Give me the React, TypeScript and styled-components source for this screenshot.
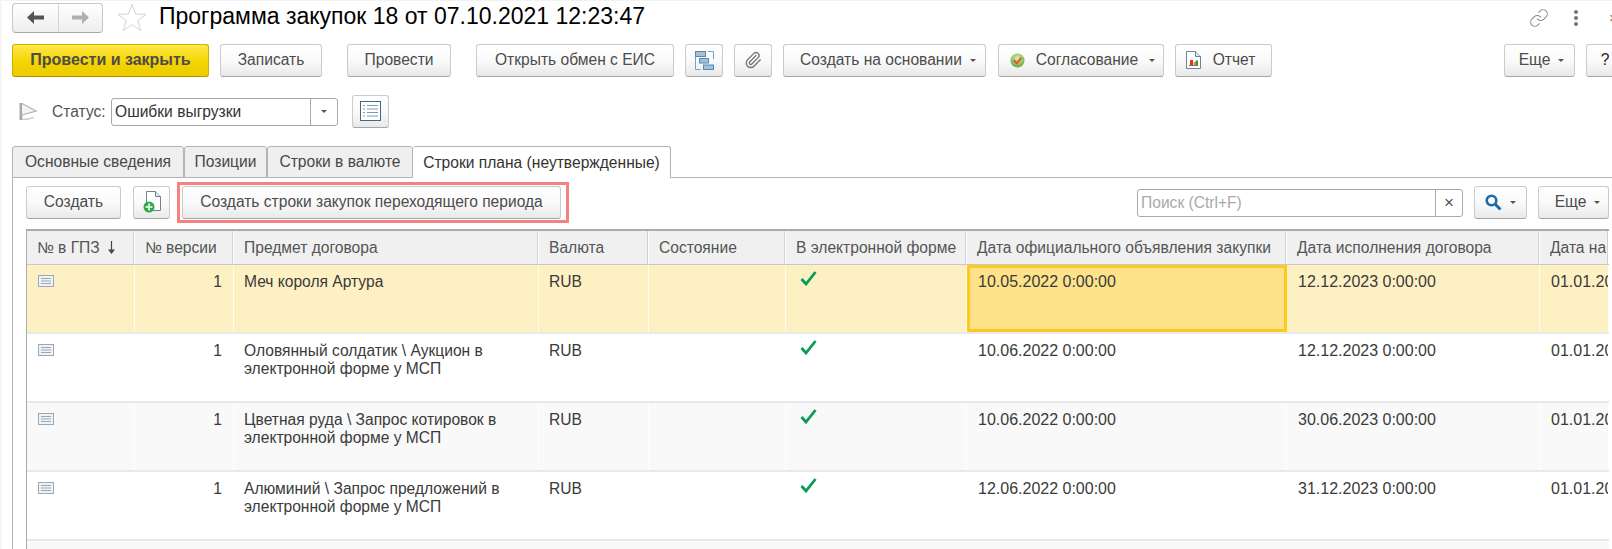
import { ReactNode } from "react";
import styled, { createGlobalStyle } from "styled-components";
import { Link, Paperclip } from "lucide-react";

const GlobalStyle = createGlobalStyle`
  html, body {
    margin: 0;
    padding: 0;
    background: #fff;
    overflow: hidden;
  }
  body {
    font-family: "Liberation Sans", Arial, sans-serif;
    font-size: 15.6px;
    color: #3b3b3b;
  }
`;

const Page = styled.div`
  width: 1612px;
  height: 549px;
  box-sizing: border-box;
  overflow: hidden;
  border-top: 1px solid #f2f2f2;
  border-left: 2px solid #f5f5f5;
  padding-left: 10px;
  display: flex;
  flex-direction: column;
`;

const TitleRow = styled.div`
  height: 31px;
  margin-top: 1px;
  display: flex;
  align-items: center;
  flex-shrink: 0;
`;

const NavGroup = styled.div`
  width: 91px;
  height: 30px;
  box-sizing: border-box;
  display: flex;
  border: 1px solid #c8c8c8;
  border-bottom-color: #a8a8a8;
  border-radius: 4px;
  background: linear-gradient(#ffffff, #eeeeee);
`;

const NavPart = styled.div<{ $first?: boolean }>`
  flex: ${(p) => (p.$first ? "0 0 45px" : "1")};
  display: flex;
  align-items: center;
  justify-content: center;
  border-right: ${(p) => (p.$first ? "1px solid #d4d4d4" : "none")};
`;

const StarBox = styled.div`
  margin-left: 14px;
  width: 30px;
  height: 29px;
`;

const Title = styled.h1`
  margin: 0 0 2px 12px;
  font-size: 23px;
  font-weight: 400;
  color: #000;
  white-space: nowrap;
`;

const TitleTools = styled.div`
  margin-left: auto;
  display: flex;
  align-items: center;
  color: #8c8c8c;
`;

const Dots = styled.div`
  margin-left: 25px;
  display: flex;
  flex-direction: column;
  gap: 2px;
  width: 4px;

  i {
    width: 4px;
    height: 4px;
    border-radius: 50%;
    background: #777;
  }
`;

const CloseMark = styled.span`
  margin-left: 31px;
  width: 3px;
  overflow: hidden;
  font-size: 15px;
  color: #777;
`;

const Toolbar = styled.div`
  display: flex;
  align-items: center;
  margin-top: 11px;
  height: 33px;
  flex-shrink: 0;
`;

const Button = styled.div<{
  $w: number;
  $gap?: number;
  $primary?: boolean;
  $inner?: number;
  $padLeft?: number;
  $padRight?: number;
}>`
  width: ${(p) => p.$w}px;
  height: 33px;
  margin-left: ${(p) => p.$gap ?? 0}px;
  box-sizing: border-box;
  flex-shrink: 0;
  display: flex;
  align-items: center;
  justify-content: center;
  gap: ${(p) => p.$inner ?? 8}px;
  padding: 0 ${(p) => p.$padRight ?? 0}px 1px ${(p) => p.$padLeft ?? 0}px;
  border: 1px solid ${(p) => (p.$primary ? "#d0b000" : "#cbcbcb")};
  border-bottom-color: ${(p) => (p.$primary ? "#b09400" : "#a6a6a6")};
  border-radius: 3px;
  background: ${(p) =>
    p.$primary
      ? "linear-gradient(#ffe94a, #f5d400 55%, #eccb00)"
      : "linear-gradient(#ffffff, #fafafa 50%, #e9e9e9)"};
  color: #4c4c4c;
  font-size: ${(p) => (p.$primary ? 16 : 15.6)}px;
  font-weight: ${(p) => (p.$primary ? 700 : 400)};
  white-space: nowrap;
`;

const HelpMark = styled.span`
  color: #222;
`;

const Caret = styled.span`
  width: 0;
  height: 0;
  border-left: 3px solid transparent;
  border-right: 3px solid transparent;
  border-top: 3px solid #555;
`;

const StatusRow = styled.div`
  display: flex;
  align-items: center;
  margin-top: 18px;
  height: 33px;
  flex-shrink: 0;
`;

const FlagBox = styled.div`
  margin-left: 7px;
  width: 18px;
  height: 19px;
`;

const StatusLabel = styled.span`
  margin-left: 15px;
  width: 59px;
  color: #555;
`;

const Combo = styled.div`
  width: 227px;
  height: 28px;
  box-sizing: border-box;
  display: flex;
  border: 1px solid #a9a9a9;
  border-radius: 3px;
  color: #333;
`;

const ComboValue = styled.div`
  flex: 1;
  display: flex;
  align-items: center;
  padding-left: 3px;
`;

const ComboArrow = styled.div`
  width: 26px;
  border-left: 1px solid #a9a9a9;
  display: flex;
  align-items: center;
  justify-content: center;
`;

const TabBar = styled.div`
  display: flex;
  margin-top: 18px;
  height: 32px;
  flex-shrink: 0;
`;

const Tab = styled.div<{ $w: number; $active?: boolean }>`
  width: ${(p) => p.$w}px;
  box-sizing: border-box;
  display: flex;
  align-items: center;
  justify-content: center;
  white-space: nowrap;
  color: ${(p) => (p.$active ? "#333" : "#484848")};
  background: ${(p) => (p.$active ? "#fff" : "#efefef")};
  border: 1px solid #b3b3b3;
  border-left-width: ${(p) => (p.$active ? 0 : 1)}px;
  border-bottom: ${(p) => (p.$active ? "none" : "1px solid #b3b3b3")};
  border-radius: 3px 3px 0 0;

  &:first-child {
    border-left-width: 1px;
  }
`;

const TabFill = styled.div`
  flex: 1;
  border-bottom: 1px solid #b3b3b3;
`;

const TabPanel = styled.div`
  flex: 1;
  min-height: 0;
  border-left: 1px solid #b3b3b3;
  padding-left: 13px;
  display: flex;
  flex-direction: column;
`;

const PanelBar = styled.div`
  display: flex;
  align-items: center;
  margin-top: 8px;
  height: 33px;
  flex-shrink: 0;
`;

const Highlight = styled.div`
  margin-left: 7px;
  padding: 1px 5px 1px 2px;
  border: 3px solid #f98080;
  display: flex;
`;

const SearchBox = styled.div`
  margin-left: auto;
  width: 326px;
  height: 28px;
  box-sizing: border-box;
  display: flex;
  border: 1px solid #a9a9a9;
  border-radius: 3px;
`;

const SearchText = styled.div`
  flex: 1;
  display: flex;
  align-items: center;
  padding-left: 3px;
  color: #a9a9a9;
`;

const SearchClear = styled.div`
  width: 26px;
  border-left: 1px solid #a9a9a9;
  display: flex;
  align-items: center;
  justify-content: center;
  color: #555;
  font-size: 17px;
`;

const RightEnd = styled.div`
  width: 3px;
  flex-shrink: 0;
`;

const Table = styled.div`
  margin-top: 10px;
  margin-right: 3px;
  flex: 1;
  min-height: 0;
  overflow: hidden;
  border: 1px solid #ababab;
  border-top-width: 2px;
  border-bottom: none;
  border-right: none;
`;

const COLUMNS = "108px 99px 305px 110px 137px 181px 320px 253px 69px";

const HeadRow = styled.div`
  display: grid;
  grid-template-columns: ${COLUMNS};
  height: 34px;
  border-bottom: 1px solid #c8c8c8;
  box-sizing: border-box;
`;

const HeadCell = styled.div`
  background: #f0f0f0;
  border-right: 1px solid #fff;
  box-shadow: inset -1px 0 0 #cfcfcf;
  padding-left: 10px;
  display: flex;
  align-items: center;
  gap: 7px;
  white-space: nowrap;
  overflow: hidden;
  color: #555;
`;

const HeadClip = styled.span`
  width: 56px;
  overflow: hidden;
`;

const Row = styled.div<{ $bg: string }>`
  display: grid;
  grid-template-columns: ${COLUMNS};
  height: 69px;
  box-sizing: border-box;
  background: ${(p) => p.$bg};
  border-bottom: 2px solid #e9e9e9;
`;

const Cell = styled.div<{ $right?: boolean }>`
  box-sizing: border-box;
  padding: 8px 11px 0 10px;
  line-height: 18px;
  color: #3a3a3a;
  text-align: ${(p) => (p.$right ? "right" : "left")};
  overflow: hidden;
  border-right: 1px solid rgba(255, 255, 255, 0.75);
`;

const DateCell = styled(Cell)<{ $active?: boolean }>`
  padding: ${(p) => (p.$active ? "5px 8px 0" : "8px 8px 0 11px")};
  font-size: 16px;
  white-space: nowrap;
  ${(p) => (p.$active ? "background: #fde28a; border: 3px solid #fcc91f;" : "")}
`;

const IconCell = styled(Cell)`
  padding: 8px 0 0 11px;
`;

const CheckCell = styled(Cell)`
  padding: 6px 0 0 14px;
`;

const ArrowIcon = ({ dir, color }: { dir: "left" | "right"; color: string }) => (
  <svg width="17" height="13" viewBox="0 0 17 13">
    <path
      d={dir === "left" ? "M0 6.500 7 0v4.500h10v4H7V13z" : "M17 6.500 10 0v4.500H0v4h10V13z"}
      fill={color}
    />
  </svg>
);

const StarIcon = () => (
  <svg width="30" height="29" viewBox="0 0 30 29">
    <path
      d="M15 1.500 18.600 11 29 11.300 20.800 17.600 23.700 27.500 15 21.700 6.300 27.500 9.200 17.600 1 11.300 11.400 11Z"
      fill="#fff"
      stroke="#d4d4d4"
    />
  </svg>
);

const FlagIcon = () => (
  <svg width="18" height="19" viewBox="0 0 18 19">
    <path d="M2 1v17" stroke="#a8a8a8" strokeWidth="3" />
    <path d="M3 1.500 17 9 3 13" fill="#f4f4f4" stroke="#b5b5b5" strokeWidth="1.300" />
    <path d="M3 17.500c5 0 8-.5 12-2" fill="none" stroke="#cfcfcf" strokeWidth="1.500" />
  </svg>
);

const StructureIcon = () => (
  <svg width="19" height="19" viewBox="0 0 19 19">
    <path d="M.5 6v12.500h5M13 .5h5.500V8" fill="none" stroke="#6fa3c7" />
    <rect x=".5" y=".5" width="10" height="5" fill="#a3c0d8" stroke="#5688ae" />
    <rect x="4.500" y="7.500" width="9" height="4.500" fill="#a3c0d8" stroke="#5688ae" />
    <rect x="8.500" y="14" width="10" height="4.500" fill="#a3c0d8" stroke="#5688ae" />
  </svg>
);

const ApprovalIcon = () => (
  <svg width="15" height="15" viewBox="0 0 16 16">
    <defs>
      <radialGradient id="approvalBall" cx="50%" cy="35%" r="70%">
        <stop offset="0%" stopColor="#d8eeb0" />
        <stop offset="100%" stopColor="#5ea532" />
      </radialGradient>
    </defs>
    <circle cx="8" cy="8" r="7.500" fill="url(#approvalBall)" />
    <path d="M4 7.500 7.300 11 12 5" fill="none" stroke="#e8502a" strokeWidth="2" />
  </svg>
);

const ReportIcon = () => (
  <svg width="15" height="18" viewBox="0 0 15 18">
    <path d="M.5.500h9l5 5v12H.5z" fill="#fff" stroke="#6f8396" />
    <path d="M9.500.500v5h5" fill="#dfe6ec" stroke="#6f8396" />
    <rect x="4" y="9" width="3" height="5" fill="#dc3a1f" />
    <rect x="7.500" y="11" width="3" height="3" fill="#e8a020" />
    <rect x="9.500" y="9.500" width="2.500" height="4.500" fill="#3e9a2e" />
    <path d="M3 14.500h9" stroke="#777" />
  </svg>
);

const ListIcon = () => (
  <svg width="21" height="20" viewBox="0 0 21 20">
    <rect x=".5" y=".5" width="20" height="19" fill="#fff" stroke="#3e6a86" />
    <path
      d="M3 4.500h2M7 4.500h11M3 8h2M7 8h11M3 11.500h2M7 11.500h11M3 15h2M7 15h11"
      stroke="#7d9aae"
    />
  </svg>
);

const AddDocIcon = () => (
  <svg width="18" height="22" viewBox="0 0 18 22">
    <path d="M3.500.5h9l5 5v14h-14z" fill="#fff" stroke="#6f8396" />
    <path d="M12.500.5v5h5" fill="#e4e9ee" stroke="#6f8396" />
    <circle cx="6" cy="16" r="5.500" fill="#2eaa48" />
    <path d="M6 12.500v7M2.500 16h7" stroke="#fff" strokeWidth="1.600" />
  </svg>
);

const SearchIcon = () => (
  <svg width="17" height="17" viewBox="0 0 17 17">
    <circle cx="6.500" cy="6.500" r="4.800" fill="none" stroke="#1f6aa5" strokeWidth="2.600" />
    <path d="M10 10l5.500 5.500" stroke="#1f6aa5" strokeWidth="3" />
  </svg>
);

const SortArrow = () => (
  <svg width="9" height="13" viewBox="0 0 9 13">
    <path d="M4.500 0v10" stroke="#444" strokeWidth="1.200" />
    <path d="M1 8.500h7L4.500 13z" fill="#444" />
  </svg>
);

const RowIcon = () => (
  <svg width="16" height="12" viewBox="0 0 16 12">
    <rect x=".5" y=".5" width="15" height="11" fill="#f0f3f6" stroke="#9aa8b8" />
    <path d="M3 3.500h10M3 6h10M3 8.500h10" stroke="#9aa8b8" />
  </svg>
);

const CheckMark = () => (
  <svg width="17" height="15" viewBox="0 0 17 15">
    <path d="M1.500 8 6 13 15.500 1" fill="none" stroke="#0a9b55" strokeWidth="2.800" />
  </svg>
);

type Purchase = {
  subject: ReactNode;
  announced: string;
  completed: string;
  bg: string;
  selected?: boolean;
};

const purchases: Purchase[] = [
  {
    subject: "Меч короля Артура",
    announced: "10.05.2022 0:00:00",
    completed: "12.12.2023 0:00:00",
    bg: "#fdf1c4",
    selected: true,
  },
  {
    subject: "Оловянный солдатик \\ Аукцион в электронной форме у МСП",
    announced: "10.06.2022 0:00:00",
    completed: "12.12.2023 0:00:00",
    bg: "#ffffff",
  },
  {
    subject: "Цветная руда \\ Запрос котировок в электронной форме у МСП",
    announced: "10.06.2022 0:00:00",
    completed: "30.06.2023 0:00:00",
    bg: "#f9f9f9",
  },
  {
    subject: "Алюминий \\ Запрос предложений в электронной форме у МСП",
    announced: "12.06.2022 0:00:00",
    completed: "31.12.2023 0:00:00",
    bg: "#ffffff",
  },
];

export default function App() {
  return (
    <Page>
      <GlobalStyle />
      <TitleRow>
        <NavGroup>
          <NavPart $first>
            <ArrowIcon dir="left" color="#555" />
          </NavPart>
          <NavPart>
            <ArrowIcon dir="right" color="#b0b0b0" />
          </NavPart>
        </NavGroup>
        <StarBox>
          <StarIcon />
        </StarBox>
        <Title>Программа закупок 18 от 07.10.2021 12:23:47</Title>
        <TitleTools>
          <Link size={20} strokeWidth={1.3} />
          <Dots>
            <i />
            <i />
            <i />
          </Dots>
          <CloseMark>×</CloseMark>
        </TitleTools>
      </TitleRow>

      <Toolbar>
        <Button $w={197} $primary>
          Провести и закрыть
        </Button>
        <Button $w={102} $gap={11}>
          Записать
        </Button>
        <Button $w={104} $gap={25}>
          Провести
        </Button>
        <Button $w={198} $gap={25}>
          Открыть обмен с ЕИС
        </Button>
        <Button $w={38} $gap={11}>
          <StructureIcon />
        </Button>
        <Button $w={38} $gap={11}>
          <Paperclip size={18} color="#777" strokeWidth={1.8} />
        </Button>
        <Button $w={203} $gap={11} $padLeft={7}>
          Создать на основании
          <Caret />
        </Button>
        <Button $w={166} $gap={12} $inner={11} $padLeft={3}>
          <ApprovalIcon />
          Согласование
          <Caret />
        </Button>
        <Button $w={97} $gap={11} $inner={12} $padRight={6}>
          <ReportIcon />
          Отчет
        </Button>
        <Button $w={71} $gap={232} $padLeft={4}>
          Еще
          <Caret />
        </Button>
        <Button $w={38} $gap={11}>
          <HelpMark>?</HelpMark>
        </Button>
      </Toolbar>

      <StatusRow>
        <FlagBox>
          <FlagIcon />
        </FlagBox>
        <StatusLabel>Статус:</StatusLabel>
        <Combo>
          <ComboValue>Ошибки выгрузки</ComboValue>
          <ComboArrow>
            <Caret />
          </ComboArrow>
        </Combo>
        <Button $w={37} $gap={14}>
          <ListIcon />
        </Button>
      </StatusRow>

      <TabBar>
        <Tab $w={172}>Основные сведения</Tab>
        <Tab $w={83}>Позиции</Tab>
        <Tab $w={146}>Строки в валюте</Tab>
        <Tab $w={258} $active>
          Строки плана (неутвержденные)
        </Tab>
        <TabFill />
      </TabBar>

      <TabPanel>
        <PanelBar>
          <Button $w={95}>Создать</Button>
          <Button $w={37} $gap={12}>
            <AddDocIcon />
          </Button>
          <Highlight>
            <Button $w={379}>Создать строки закупок переходящего периода</Button>
          </Highlight>
          <SearchBox>
            <SearchText>Поиск (Ctrl+F)</SearchText>
            <SearchClear>×</SearchClear>
          </SearchBox>
          <Button $w={53} $gap={11}>
            <SearchIcon />
            <Caret />
          </Button>
          <Button $w={71} $gap={11} $padLeft={8}>
            Еще
            <Caret />
          </Button>
          <RightEnd />
        </PanelBar>

        <Table>
          <HeadRow>
            <HeadCell>
              № в ГПЗ
              <SortArrow />
            </HeadCell>
            <HeadCell>№ версии</HeadCell>
            <HeadCell>Предмет договора</HeadCell>
            <HeadCell>Валюта</HeadCell>
            <HeadCell>Состояние</HeadCell>
            <HeadCell>В электронной форме</HeadCell>
            <HeadCell>Дата официального объявления закупки</HeadCell>
            <HeadCell>Дата исполнения договора</HeadCell>
            <HeadCell>
              <HeadClip>Дата начала</HeadClip>
            </HeadCell>
          </HeadRow>
          {purchases.map((item) => (
            <Row key={item.announced + item.completed} $bg={item.bg}>
              <IconCell>
                <RowIcon />
              </IconCell>
              <Cell $right>1</Cell>
              <Cell>{item.subject}</Cell>
              <Cell>RUB</Cell>
              <Cell />
              <CheckCell>
                <CheckMark />
              </CheckCell>
              <DateCell $active={item.selected}>{item.announced}</DateCell>
              <DateCell>{item.completed}</DateCell>
              <DateCell>01.01.2022 0:00:00</DateCell>
            </Row>
          ))}
          <Row $bg="#f9f9f9" />
        </Table>
      </TabPanel>
    </Page>
  );
}
